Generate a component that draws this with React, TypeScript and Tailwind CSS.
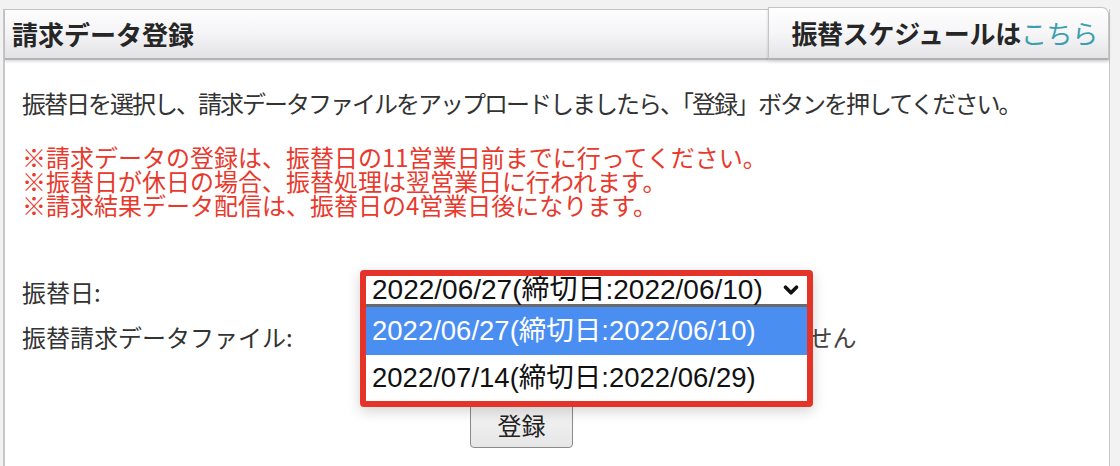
import { ChevronDown } from 'lucide-react';

const JP = "font-['Noto_Sans_CJK_JP',sans-serif]";
const SEL = "font-['Liberation_Sans','Noto_Sans_CJK_JP',sans-serif]";

export default function App() {
  return (
    <div className={`min-h-screen bg-[#f2f2f2] pt-[9px] pl-[3px] pr-[10px] ${JP}`}>
      <div className="h-[457px] border-l-2 border-r border-[#c8c8c8] bg-white">
        {/* header bar */}
        <div className="flex h-[51px]">
          <div className="flex flex-1 items-center border-t border-b-2 border-[#c4c4c6] border-b-[#b4b4b6] bg-gradient-to-b from-[#fdfdfe] via-[#f4f4f6] to-[#e2e2e5] pl-[7px] shadow-[0_2px_2px_rgba(0,0,0,0.12)]">
            <span className="text-[26px] font-bold leading-none text-[#262626]">請求データ登録</span>
          </div>
          <div className="-mt-[2px] flex w-[341px] items-center justify-end rounded-tr-[7px] border border-b-2 border-[#c4c4c6] border-b-[#b0b0b3] bg-gradient-to-b from-[#fefefe] via-[#f6f6f8] to-[#e4e4e7] pr-[10px] shadow-[0_2px_3px_rgba(0,0,0,0.18)]">
            <span className="text-[26px] font-bold leading-none tracking-[-0.3px] text-[#262626]">
              振替スケジュールは<span className="font-normal text-[#3c9fae]">こちら</span>
            </span>
          </div>
        </div>

        {/* body */}
        <div className="pl-[17px] pt-[31px] text-[#333]">
          <p className="text-[24px] leading-[24px] tracking-[-2px]">
            振替日を選択し、請求データファイルをアップロードしましたら、「登録」ボタンを押してください。
          </p>
          <div className="mt-[30px] text-[24px] leading-[24px] text-[#e8392c]">
            <p>※請求データの登録は、振替日の11営業日前までに行ってください。</p>
            <p>※振替日が休日の場合、振替処理は翌営業日に行われます。</p>
            <p>※請求結果データ配信は、振替日の4営業日後になります。</p>
          </div>

          {/* date row */}
          <div className="mt-[59px] flex h-[32px] items-center">
            <span className="w-[344px] text-[24px] leading-none">振替日:</span>
            <div className="relative h-[32px] w-[441px]">
              <div className="absolute -left-[6px] -top-[6px] z-10 w-[453px] overflow-hidden rounded-[4px] border-[6px] border-[#e4342a] bg-white shadow-[0_4px_14px_rgba(0,0,0,0.18)]">
                <div className={`flex h-[31px] items-center justify-between border-b-[3px] border-[#6a6a6a] pl-[6px] pr-[5px] text-[28px] leading-none text-[#111] ${SEL}`}>
                  <span>2022/06/27(締切日:2022/06/10)</span>
                  <ChevronDown size={22} strokeWidth={4} className="text-[#111]" />
                </div>
                <div className={`flex h-[48px] items-center bg-[#4a8ef1] pl-[6px] text-[27.5px] leading-none text-white ${SEL}`}>
                  2022/06/27(締切日:2022/06/10)
                </div>
                <div className={`flex h-[46px] items-center pl-[6px] text-[27.5px] leading-none text-[#111] ${SEL}`}>
                  2022/07/14(締切日:2022/06/29)
                </div>
              </div>
            </div>
          </div>

          {/* file row */}
          <div className="mt-[13px] flex h-[32px] items-center">
            <span className="w-[344px] text-[24px] leading-none">振替請求データファイル:</span>
            <div className="flex items-center">
              <button className="h-[30px] w-[262px] rounded-[3px] border border-[#8a8a8a] bg-[#efefef] text-[20px]">
                ファイルを選択
              </button>
              <span className="ml-[14px] text-[24px] leading-none text-[#444]">選択されていません</span>
            </div>
          </div>

          {/* submit */}
          <div className="mt-[48px] pl-[448px]">
            <button className="flex h-[47px] w-[103px] items-center justify-center rounded-[4px] border border-[#8a8a8a] bg-gradient-to-b from-[#f6f6f6] to-[#e6e6e6] text-[24px] text-[#222]">
              登録
            </button>
          </div>
        </div>
      </div>
    </div>
  );
}
